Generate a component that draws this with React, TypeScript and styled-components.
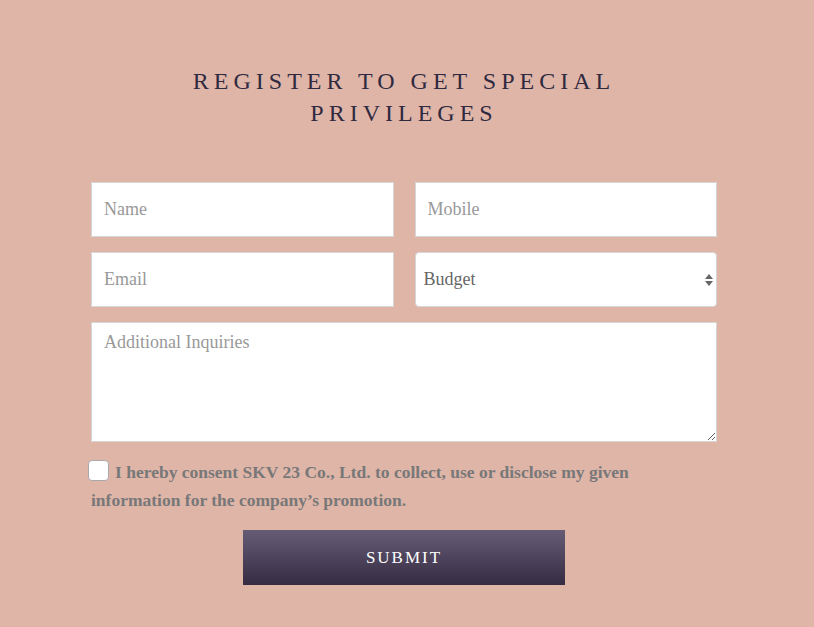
import styled, { createGlobalStyle } from 'styled-components'

const GlobalStyle = createGlobalStyle`
  html, body {
    margin: 0;
    padding: 0;
    background: #dfb5a8;
  }
  body {
    font-family: "Liberation Serif", "Times New Roman", serif;
  }
`

const Page = styled.div`
  min-height: 627px;
  background: #dfb5a8;
  padding: 65px 6px 40px 0;
  box-sizing: border-box;
`

const Wrapper = styled.div`
  width: 626px;
  margin: 0 auto;
  display: flex;
  flex-direction: column;
  align-items: center;
`

const Title = styled.h2`
  margin: 0 0 53px;
  font-weight: 400;
  font-size: 24px;
  line-height: 32px;
  letter-spacing: 5px;
  text-align: center;
  color: #2f2a40;
  width: 470px;
`

const FormGrid = styled.form`
  width: 100%;
  display: grid;
  grid-template-columns: 1fr 1fr;
  column-gap: 21px;
  row-gap: 15px;
`

const Field = styled.input`
  height: 55px;
  box-sizing: border-box;
  border: 1px solid #d6d6d6;
  background: #fff;
  padding: 0 12px;
  font-family: inherit;
  font-size: 18px;
  color: #555;
  outline: none;
  border-radius: 0;

  &::placeholder {
    color: #999;
  }
`

const SelectBox = styled.div`
  position: relative;
  height: 55px;
  box-sizing: border-box;
  border: 1px solid #d6d6d6;
  border-radius: 4px;
  background: #fff;
  display: flex;
  align-items: center;
  padding: 0 8px;
  font-size: 18px;
  color: #666;
`

const Arrows = styled.span`
  margin-left: auto;
  margin-right: -5px;
  display: flex;
  flex-direction: column;
  gap: 2px;
`

const TextArea = styled.textarea`
  grid-column: 1 / span 2;
  height: 120px;
  box-sizing: border-box;
  border: 1px solid #d6d6d6;
  padding: 9px 12px;
  font-family: inherit;
  font-size: 18px;
  color: #555;
  resize: both;
  outline: none;
  border-radius: 0;

  &::placeholder {
    color: #999;
  }
`

const Consent = styled.label`
  grid-column: 1 / span 2;
  margin-top: 1px;
  padding-right: 40px;
  display: block;
  font-weight: 700;
  font-size: 17.5px;
  line-height: 28px;
  color: #787878;
`

const Check = styled.span`
  display: inline-block;
  width: 19px;
  height: 19px;
  vertical-align: -3px;
  margin: 0 6px 0 -3px;
  border: 1px solid #a9a9a9;
  border-radius: 4px;
  background: #fff;
`

const ButtonRow = styled.div`
  grid-column: 1 / span 2;
  display: flex;
  justify-content: center;
  margin-top: 1px;
`

const Submit = styled.button`
  width: 322px;
  height: 55px;
  border: none;
  background: linear-gradient(to bottom, #665c76, #352c43);
  color: #fff;
  font-family: inherit;
  font-size: 17px;
  letter-spacing: 2px;
  cursor: pointer;
`

const App = () => {
  return (
    <Page>
      <GlobalStyle />
      <Wrapper>
        <Title>REGISTER TO GET SPECIAL PRIVILEGES</Title>
        <FormGrid onSubmit={e => e.preventDefault()}>
          <Field placeholder="Name" />
          <Field placeholder="Mobile" />
          <Field placeholder="Email" />
          <SelectBox>
            Budget
            <Arrows>
              <svg width="8" height="5" viewBox="0 0 8 5">
                <path d="M4 0 L8 5 L0 5 Z" fill="#666" />
              </svg>
              <svg width="8" height="5" viewBox="0 0 8 5">
                <path d="M0 0 L8 0 L4 5 Z" fill="#666" />
              </svg>
            </Arrows>
          </SelectBox>
          <TextArea placeholder="Additional Inquiries" />
          <Consent>
            <Check />
            I hereby consent SKV 23 Co., Ltd. to collect, use or disclose my given information for the company’s promotion.
          </Consent>
          <ButtonRow>
            <Submit type="submit">SUBMIT</Submit>
          </ButtonRow>
        </FormGrid>
      </Wrapper>
    </Page>
  )
}

export default App
